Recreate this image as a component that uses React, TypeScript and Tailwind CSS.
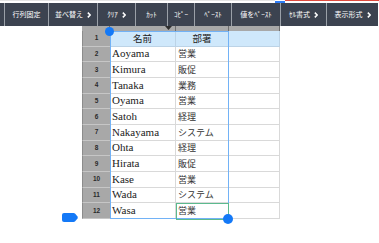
import React from "react";

const buttons: { label: string; w: string; chev?: boolean }[] = [
  { label: "行列固定", w: "w-[44px]" },
  { label: "並べ替え", w: "w-[49px]", chev: true },
  { label: "ｸﾘｱ", w: "w-[38px]", chev: true },
  { label: "ｶｯﾄ", w: "w-[32px]" },
  { label: "ｺﾋﾟｰ", w: "w-[27px]" },
  { label: "ﾍﾟｰｽﾄ", w: "w-[37px]" },
  { label: "値をﾍﾟｰｽﾄ", w: "w-[49px]" },
  { label: "ｾﾙ書式", w: "w-[46px]", chev: true },
  { label: "表示形式", w: "w-[52px]", chev: true },
];

const data: [string, string][] = [
  ["Aoyama", "営業"],
  ["Kimura", "販促"],
  ["Tanaka", "業務"],
  ["Oyama", "営業"],
  ["Satoh", "経理"],
  ["Nakayama", "システム"],
  ["Ohta", "経理"],
  ["Hirata", "販促"],
  ["Kase", "営業"],
  ["Wada", "システム"],
  ["Wasa", "営業"],
];

const jp = { fontFamily: '"Noto Sans CJK JP", sans-serif' };
const serif = { fontFamily: '"Liberation Serif", "Noto Sans CJK JP", serif' };

function Chevron() {
  return (
    <svg width="4" height="6" viewBox="0 0 4 6" className="ml-[4px]">
      <path d="M0.8 0.6 L3.2 3 L0.8 5.4" fill="none" stroke="white" strokeWidth="1.5" />
    </svg>
  );
}

function RowHeader({ n }: { n: number }) {
  return (
    <div
      className="flex items-center justify-center bg-[#a8a8a8] border-b border-[#c6c6c6] border-l border-l-[#8c8c8c] text-[6.5px] text-[#2a2a2a] font-bold"
      style={{ fontFamily: '"Liberation Sans", sans-serif' }}
    >
      {n}
    </div>
  );
}

export default function App() {
  return (
    <div className="relative w-[379px] h-[243px] bg-white overflow-hidden">
      {/* top status line */}
      <div className="flex h-[3px]">
        <div className="w-[275px] h-[1px] bg-[#e4e4e4]" />
        <div className="w-[10px] h-[2px] mt-[1px] bg-[#2f7df6]" />
        <div className="flex-1 h-[1px] bg-[#df4a3e]" />
      </div>

      {/* toolbar */}
      <div className="flex h-[23px] w-[378px] bg-[#3c4350] pl-[4px]" style={jp}>
        {buttons.map((b, i) => (
          <div
            key={i}
            className={`${b.w} flex items-center justify-center border-l border-[#9aa0a8] text-white text-[7px] leading-none`}
          >
            <span>{b.label}</span>
            {b.chev && <Chevron />}
          </div>
        ))}
      </div>

      {/* spreadsheet */}
      <div className="ml-[82px] w-[198px]">
        <div className="flex h-[5px] bg-[#a8a8a8]">
          <div className="w-[28px] border-r border-[#6e6e6e]" />
          <div className="w-[66px] border-r border-[#6e6e6e]" />
          <div className="w-[53px] border-r border-[#6e6e6e]" />
          <div className="w-[51px] border-r border-[#6e6e6e]" />
        </div>
        <div className="grid grid-cols-[28px_66px_53px_51px] grid-rows-[repeat(12,minmax(0,1fr))] h-[188px]">
          <RowHeader n={1} />
          <div
            className="flex items-center justify-center bg-[#cfe8fb] border-b border-r border-[#bcd3e6] text-[9.5px] text-[#222]"
            style={jp}
          >
            名前
          </div>
          <div
            className="flex items-center justify-center bg-[#cfe8fb] border-b border-r border-[#bcd3e6] text-[9.5px] text-[#222]"
            style={jp}
          >
            部署
          </div>
          <div className="bg-[#cfe8fb] border-b border-r border-[#bcd3e6]" />
          {data.map(([name, dept], i) => (
            <React.Fragment key={i}>
              <RowHeader n={i + 2} />
              <div
                className="flex items-center pl-[2px] border-b border-r border-[#d9d9d9] text-[11px] text-[#222] leading-none"
                style={serif}
              >
                {name}
              </div>
              <div
                className="flex items-center pl-[2px] border-b border-r border-[#d9d9d9] text-[9px] text-[#333] leading-none"
                style={jp}
              >
                {dept}
              </div>
              <div className="border-b border-r border-[#d9d9d9]" />
            </React.Fragment>
          ))}
        </div>
      </div>

      {/* column dropdown marker */}
      <svg className="absolute left-[165px] top-[26px]" width="7" height="4" viewBox="0 0 7 4">
        <path d="M0 0 H7 L3.5 4 Z" fill="#2e2e2e" />
      </svg>

      {/* selection box */}
      <div className="absolute left-[110px] top-[31px] w-[119px] h-[188px] border border-[#72b2f6]" />
      {/* active cell */}
      <div className="absolute left-[176px] top-[203px] w-[53px] h-[17px] border border-[#5cba8e]" />

      {/* handles */}
      <div className="absolute left-[105px] top-[27px] w-[9px] h-[9px] rounded-full bg-[#1479f7]" />
      <div className="absolute left-[223px] top-[214px] w-[10px] h-[10px] rounded-full bg-[#1479f7]" />

      {/* left row tag */}
      <svg className="absolute left-[62px] top-[213px]" width="16" height="9" viewBox="0 0 16 9">
        <path d="M2 0 H11.5 Q12.5 0 13.2 0.8 L15.5 3.6 Q16 4.5 15.5 5.4 L13.2 8.2 Q12.5 9 11.5 9 H2 Q0 9 0 7 V2 Q0 0 2 0 Z" fill="#1479f7" />
      </svg>
    </div>
  );
}
